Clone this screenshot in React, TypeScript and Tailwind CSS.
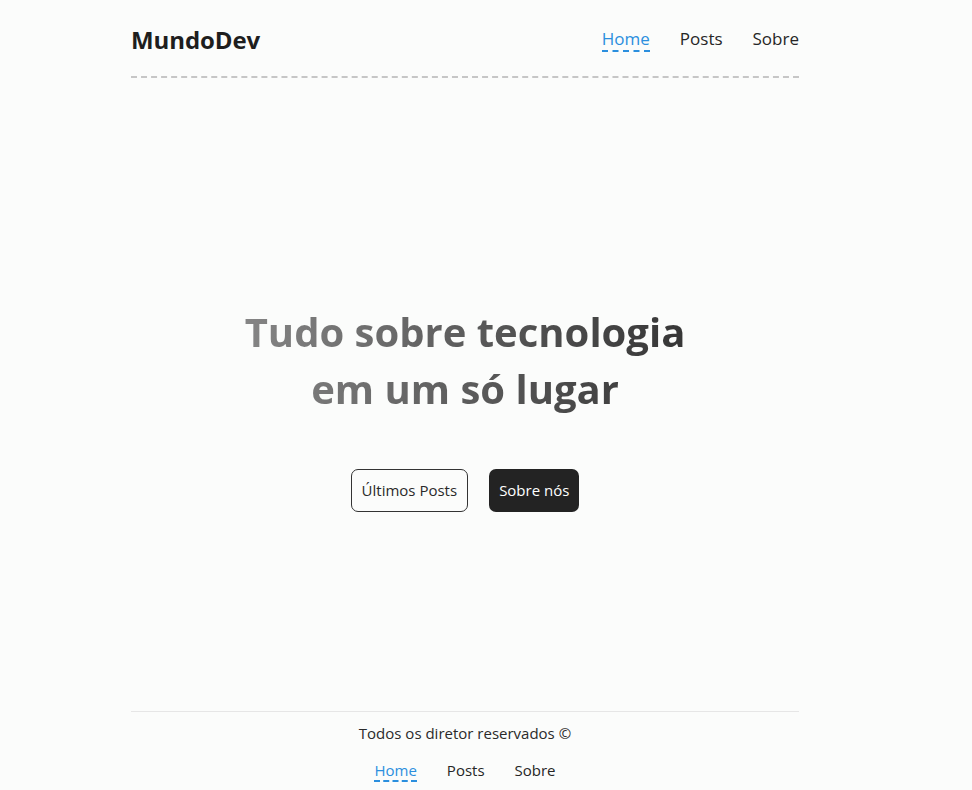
import React from "react";

const links = ["Home", "Posts", "Sobre"];

function NavLinks({ size }: { size: "lg" | "md" }) {
  return (
    <nav className={`flex items-center ${size === "lg" ? "gap-[30px] text-[17px]" : "gap-[30px] text-[15px]"}`}>
      {links.map((l, i) => (
        <a
          key={l}
          href="#"
          className={
            i === 0
              ? "text-[#2b8fde] border-b-2 border-dashed border-[#2b8fde] leading-[1.3]"
              : "text-[#262626] leading-[1.3] border-b-2 border-transparent"
          }
        >
          {l}
        </a>
      ))}
    </nav>
  );
}

export default function App() {
  return (
    <div className="min-h-[790px] bg-[#fbfcfb] text-[#222] font-['Open_Sans',sans-serif]">
      <div className="w-[930px] min-h-[790px] flex flex-col">
        <header className="w-[668px] mx-auto h-[78px] pt-[4px] flex items-center justify-between border-b-2 border-dashed border-[#c6c6c6]">
          <h1 className="text-[24px] font-bold tracking-[-0.1px] text-[#1e1e1e]">MundoDev</h1>
          <NavLinks size="lg" />
        </header>

        <main className="flex-1 flex flex-col items-center justify-center pt-[85px]">
          <h2 className="w-fit text-center text-[40px] leading-[57px] font-bold bg-linear-to-r from-[#858585] to-[#363636] bg-clip-text text-transparent">
            Tudo sobre tecnologia
            <br />
            em um só lugar
          </h2>
          <div className="mt-[52px] flex gap-[21px]">
            <button className="h-[43px] px-[10px] rounded-[7px] border border-[#333] text-[15px] text-[#2a2a2a] bg-transparent">
              Últimos Posts
            </button>
            <button className="h-[43px] px-[10px] rounded-[7px] bg-[#232323] text-[15px] text-white">
              Sobre nós
            </button>
          </div>
        </main>

        <footer className="w-[668px] mx-auto mt-[60px] border-t border-[#e6e6e6] flex flex-col items-center pt-[10px] pb-[8px] gap-[16px]">
          <p className="text-[15px] text-[#2a2a2a]">Todos os diretor reservados ©</p>
          <NavLinks size="md" />
        </footer>
      </div>
    </div>
  );
}
